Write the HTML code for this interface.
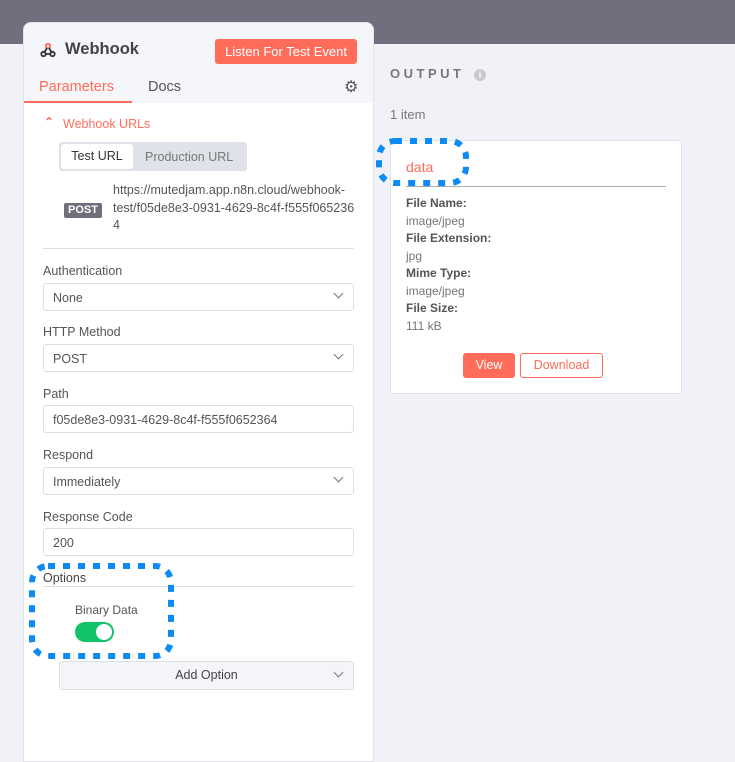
<!DOCTYPE html>
<html><head><meta charset="utf-8"><style>
*{box-sizing:border-box;margin:0;padding:0}
body{width:735px;height:750px;overflow:hidden;background:#f1f2f7;font-family:"Liberation Sans",sans-serif;position:relative;color:#555}
.top{position:absolute;left:0;top:0;width:735px;height:44px;background:#716e7d}
.panel{position:absolute;left:23px;top:22px;width:351px;height:740px;background:#fff;border-radius:8px 8px 0 0;border:1px solid #e3e4ea;overflow:hidden}
.hdr{position:absolute;left:0;top:0;width:100%;height:80px;background:#f5f6f9}
.a{position:absolute;white-space:nowrap}
.btn{background:#ff6d5a;color:#fff;border-radius:3px;font-size:13px;text-align:center}
.in{position:absolute;left:19px;width:311px;height:28px;border:1px solid #dcdfe6;border-radius:3px;font-size:12.5px;color:#555;padding:7px 9px}
.lbl{position:absolute;left:19px;font-size:12.5px;color:#555}
.chev{position:absolute;right:11px;top:6px;width:7px;height:7px;border-right:1.2px solid #777;border-bottom:1.2px solid #777;transform:rotate(45deg)}
.card{position:absolute;left:390px;top:140px;width:292px;height:254px;background:#fff;border:1px solid #e1e3ea;border-radius:3px}
.k{font-size:12px;color:#555;font-weight:bold;position:absolute;left:15px}
.v{font-size:12px;color:#777;position:absolute;left:15px}
</style></head><body>
<div class="top"></div>
<div class="panel">
<div class="hdr"></div>
<svg class="a" style="left:16px;top:19px" width="16" height="16" viewBox="0 0 16 16"><g fill="none" stroke="#333" stroke-width="1.8"><circle cx="8" cy="4" r="2.2" stroke="#ff6d5a"/><circle cx="3.5" cy="12" r="2.2"/><circle cx="12.5" cy="12" r="2.2"/><path d="M7 6 L4 11 M9 6 L12 11 M5.5 12 H10.5"/></g></svg>
<div class="a" style="left:41px;top:17px;font-size:16.5px;font-weight:bold;color:#444">Webhook</div>
<div class="a btn" style="left:191px;top:16px;width:142px;height:25px;line-height:25px">Listen For Test Event</div>
<div class="a" style="left:15px;top:56px;font-size:14.5px;color:#ff6d5a">Parameters</div>
<div class="a" style="left:0;top:78px;width:108px;height:2px;background:#ff6d5a"></div>
<div class="a" style="left:124px;top:56px;font-size:14.5px;color:#555">Docs</div>
<div class="a" style="left:320px;top:54px;font-size:16px;color:#555">⚙</div>
<div class="a" style="left:20px;top:92px;font-size:12px;color:#ff6d5a;font-weight:bold">&#8963;</div>
<div class="a" style="left:39px;top:94px;font-size:12.5px;color:#ff6d5a">Webhook URLs</div>
<div class="a" style="left:35px;top:119px;width:188px;height:29px;background:#dfe2e9;border-radius:3px"></div>
<div class="a" style="left:37px;top:121px;width:72px;height:25px;background:#fff;border-radius:3px;font-size:12.5px;color:#333;text-align:center;line-height:25px">Test URL</div>
<div class="a" style="left:121px;top:127px;font-size:12.5px;color:#777">Production URL</div>
<div class="a" style="left:40px;top:180px;width:38px;height:15px;background:#6e6f7a;color:#fff;font-size:11px;font-weight:bold;text-align:center;line-height:15px;border-radius:2px">POST</div>
<div class="a" style="left:89px;top:159px;font-size:12.5px;color:#555;line-height:17.5px">https://mutedjam.app.n8n.cloud/webhook-<br>test/f05de8e3-0931-4629-8c4f-f555f065236<br>4</div>
<div class="a" style="left:19px;top:225px;width:311px;height:1px;background:#dcdfe6"></div>
<div class="lbl" style="top:241px">Authentication</div>
<div class="in" style="top:260px">None<div class="chev"></div></div>
<div class="lbl" style="top:302px">HTTP Method</div>
<div class="in" style="top:321px">POST<div class="chev"></div></div>
<div class="lbl" style="top:364px">Path</div>
<div class="in" style="top:382px">f05de8e3-0931-4629-8c4f-f555f0652364</div>
<div class="lbl" style="top:425px">Respond</div>
<div class="in" style="top:444px">Immediately<div class="chev"></div></div>
<div class="lbl" style="top:487px">Response Code</div>
<div class="in" style="top:505px">200</div>
<div class="lbl" style="top:548px;color:#444">Options</div>
<div class="a" style="left:19px;top:563px;width:311px;height:1px;background:#dcdfe6"></div>
<div class="a" style="left:51px;top:580px;font-size:12px;color:#555">Binary Data</div>
<div class="a" style="left:51px;top:599px;width:39px;height:20px;background:#13c26b;border-radius:10px"><div style="position:absolute;right:2px;top:2px;width:16px;height:16px;background:#fff;border-radius:50%"></div></div>
<div class="a" style="left:35px;top:638px;width:295px;height:29px;background:#f4f5f8;border:1px solid #dcdfe6;border-radius:3px;font-size:12.5px;color:#444;text-align:center;line-height:27px">Add Option<div class="chev" style="top:7px"></div></div>
</div>
<div class="a" style="left:390px;top:66px;font-size:13px;letter-spacing:3.5px;color:#777;font-weight:bold">OUTPUT</div>
<div class="a" style="left:474px;top:69px;width:12px;height:12px;border-radius:50%;background:#c8c9cf;color:#fff;font-size:9px;text-align:center;line-height:12px;font-weight:bold">i</div>
<div class="a" style="left:390px;top:107px;font-size:13px;color:#777">1 item</div>
<div class="card">
<div class="a" style="left:15px;top:18px;font-size:14px;color:#ff6d5a">data</div>
<div class="a" style="left:15px;top:45px;width:260px;height:1px;background:#aaa"></div>
<div class="k" style="top:55px">File Name:</div><div class="v" style="top:73px">image/jpeg</div>
<div class="k" style="top:90px">File Extension:</div><div class="v" style="top:108px">jpg</div>
<div class="k" style="top:125px">Mime Type:</div><div class="v" style="top:143px">image/jpeg</div>
<div class="k" style="top:160px">File Size:</div><div class="v" style="top:178px">111 kB</div>
<div class="a btn" style="left:72px;top:212px;width:52px;height:25px;line-height:25px;font-size:12.5px">View</div>
<div class="a" style="left:129px;top:212px;width:83px;height:25px;line-height:23px;border:1px solid #ff6d5a;border-radius:3px;color:#ff6d5a;font-size:12.5px;text-align:center">Download</div>
</div>
<svg class="a" style="left:0;top:0" width="735" height="750"><g fill="none" stroke="#0d8bf2" stroke-width="6" stroke-dasharray="7 8"><rect x="379" y="141" width="87" height="42" rx="16"/><rect x="32" y="566" width="139" height="90" rx="16"/></g></svg>
</body></html>
